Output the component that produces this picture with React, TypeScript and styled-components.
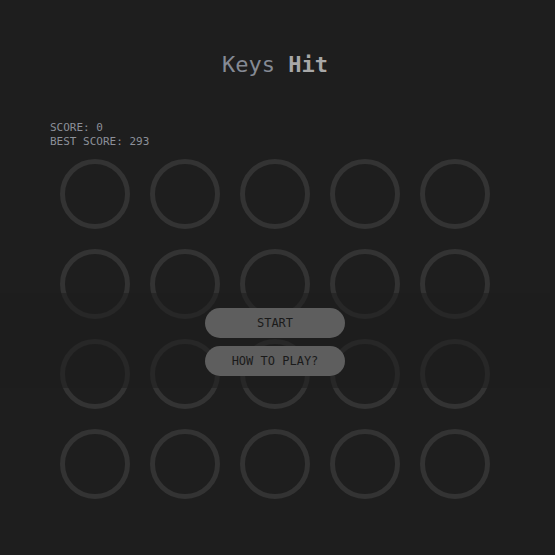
import React from "react"
import styled, { createGlobalStyle } from "styled-components"

const GlobalStyle = createGlobalStyle`
  html, body {
    margin: 0;
    padding: 0;
    background: #1e1e1e;
    overflow: hidden;
  }
  body {
    font-family: "DejaVu Sans Mono", "Liberation Mono", monospace;
  }
`

const StyledApp = styled("main")`
  width: 550px;
  min-height: 555px;
  background: #1e1e1e;
`

const Title = styled("h1")`
  margin: 0;
  padding-top: 50px;
  height: 30px;
  line-height: 30px;
  font-size: 22px;
  font-weight: normal;
  text-align: center;
  color: #858a94;
  b {
    font-weight: bold;
    color: #a8a8a8;
  }
`

const Board = styled("section")`
  padding-left: 50px;
  margin-top: 41px;
`

const Scores = styled("div")`
  font-size: 11px;
  line-height: 14px;
  color: #8c9099;
  margin-bottom: 10px;
`

const GridWrap = styled("div")`
  position: relative;
  width: 430px;
  margin-left: 10px;
`

const Grid = styled("div")`
  display: grid;
  grid-template-columns: repeat(5, 70px);
  grid-auto-rows: 70px;
  gap: 20px;
`

const Key = styled("div")`
  box-sizing: border-box;
  width: 70px;
  height: 70px;
  border-radius: 50%;
  border: 5px solid #333333;
`

const Overlay = styled("div")`
  position: absolute;
  left: -60px;
  right: -60px;
  top: 134px;
  height: 95px;
  background: rgba(30, 30, 30, 0.55);
  display: flex;
  flex-direction: column;
  align-items: center;
  justify-content: center;
  gap: 8px;
  padding-top: 2px;
  box-sizing: border-box;
`

const Button = styled("button")`
  width: 140px;
  height: 30px;
  border: none;
  border-radius: 15px;
  background: #5e5e5e;
  color: #1a1a1a;
  font-family: "DejaVu Sans Mono", "Liberation Mono", monospace;
  font-size: 12px;
  padding: 0;
  cursor: pointer;
`

export const App: React.FC = () => {
  const keys = Array.from({ length: 20 }, (_, i) => i)
  return (
    <StyledApp>
      <GlobalStyle />
      <Title>
        Keys <b>Hit</b>
      </Title>
      <Board>
        <Scores>
          SCORE: 0
          <br />
          BEST SCORE: 293
        </Scores>
        <GridWrap>
          <Grid>
            {keys.map((k) => (
              <Key key={k} />
            ))}
          </Grid>
          <Overlay>
            <Button>START</Button>
            <Button>HOW TO PLAY?</Button>
          </Overlay>
        </GridWrap>
      </Board>
    </StyledApp>
  )
}

export default App
